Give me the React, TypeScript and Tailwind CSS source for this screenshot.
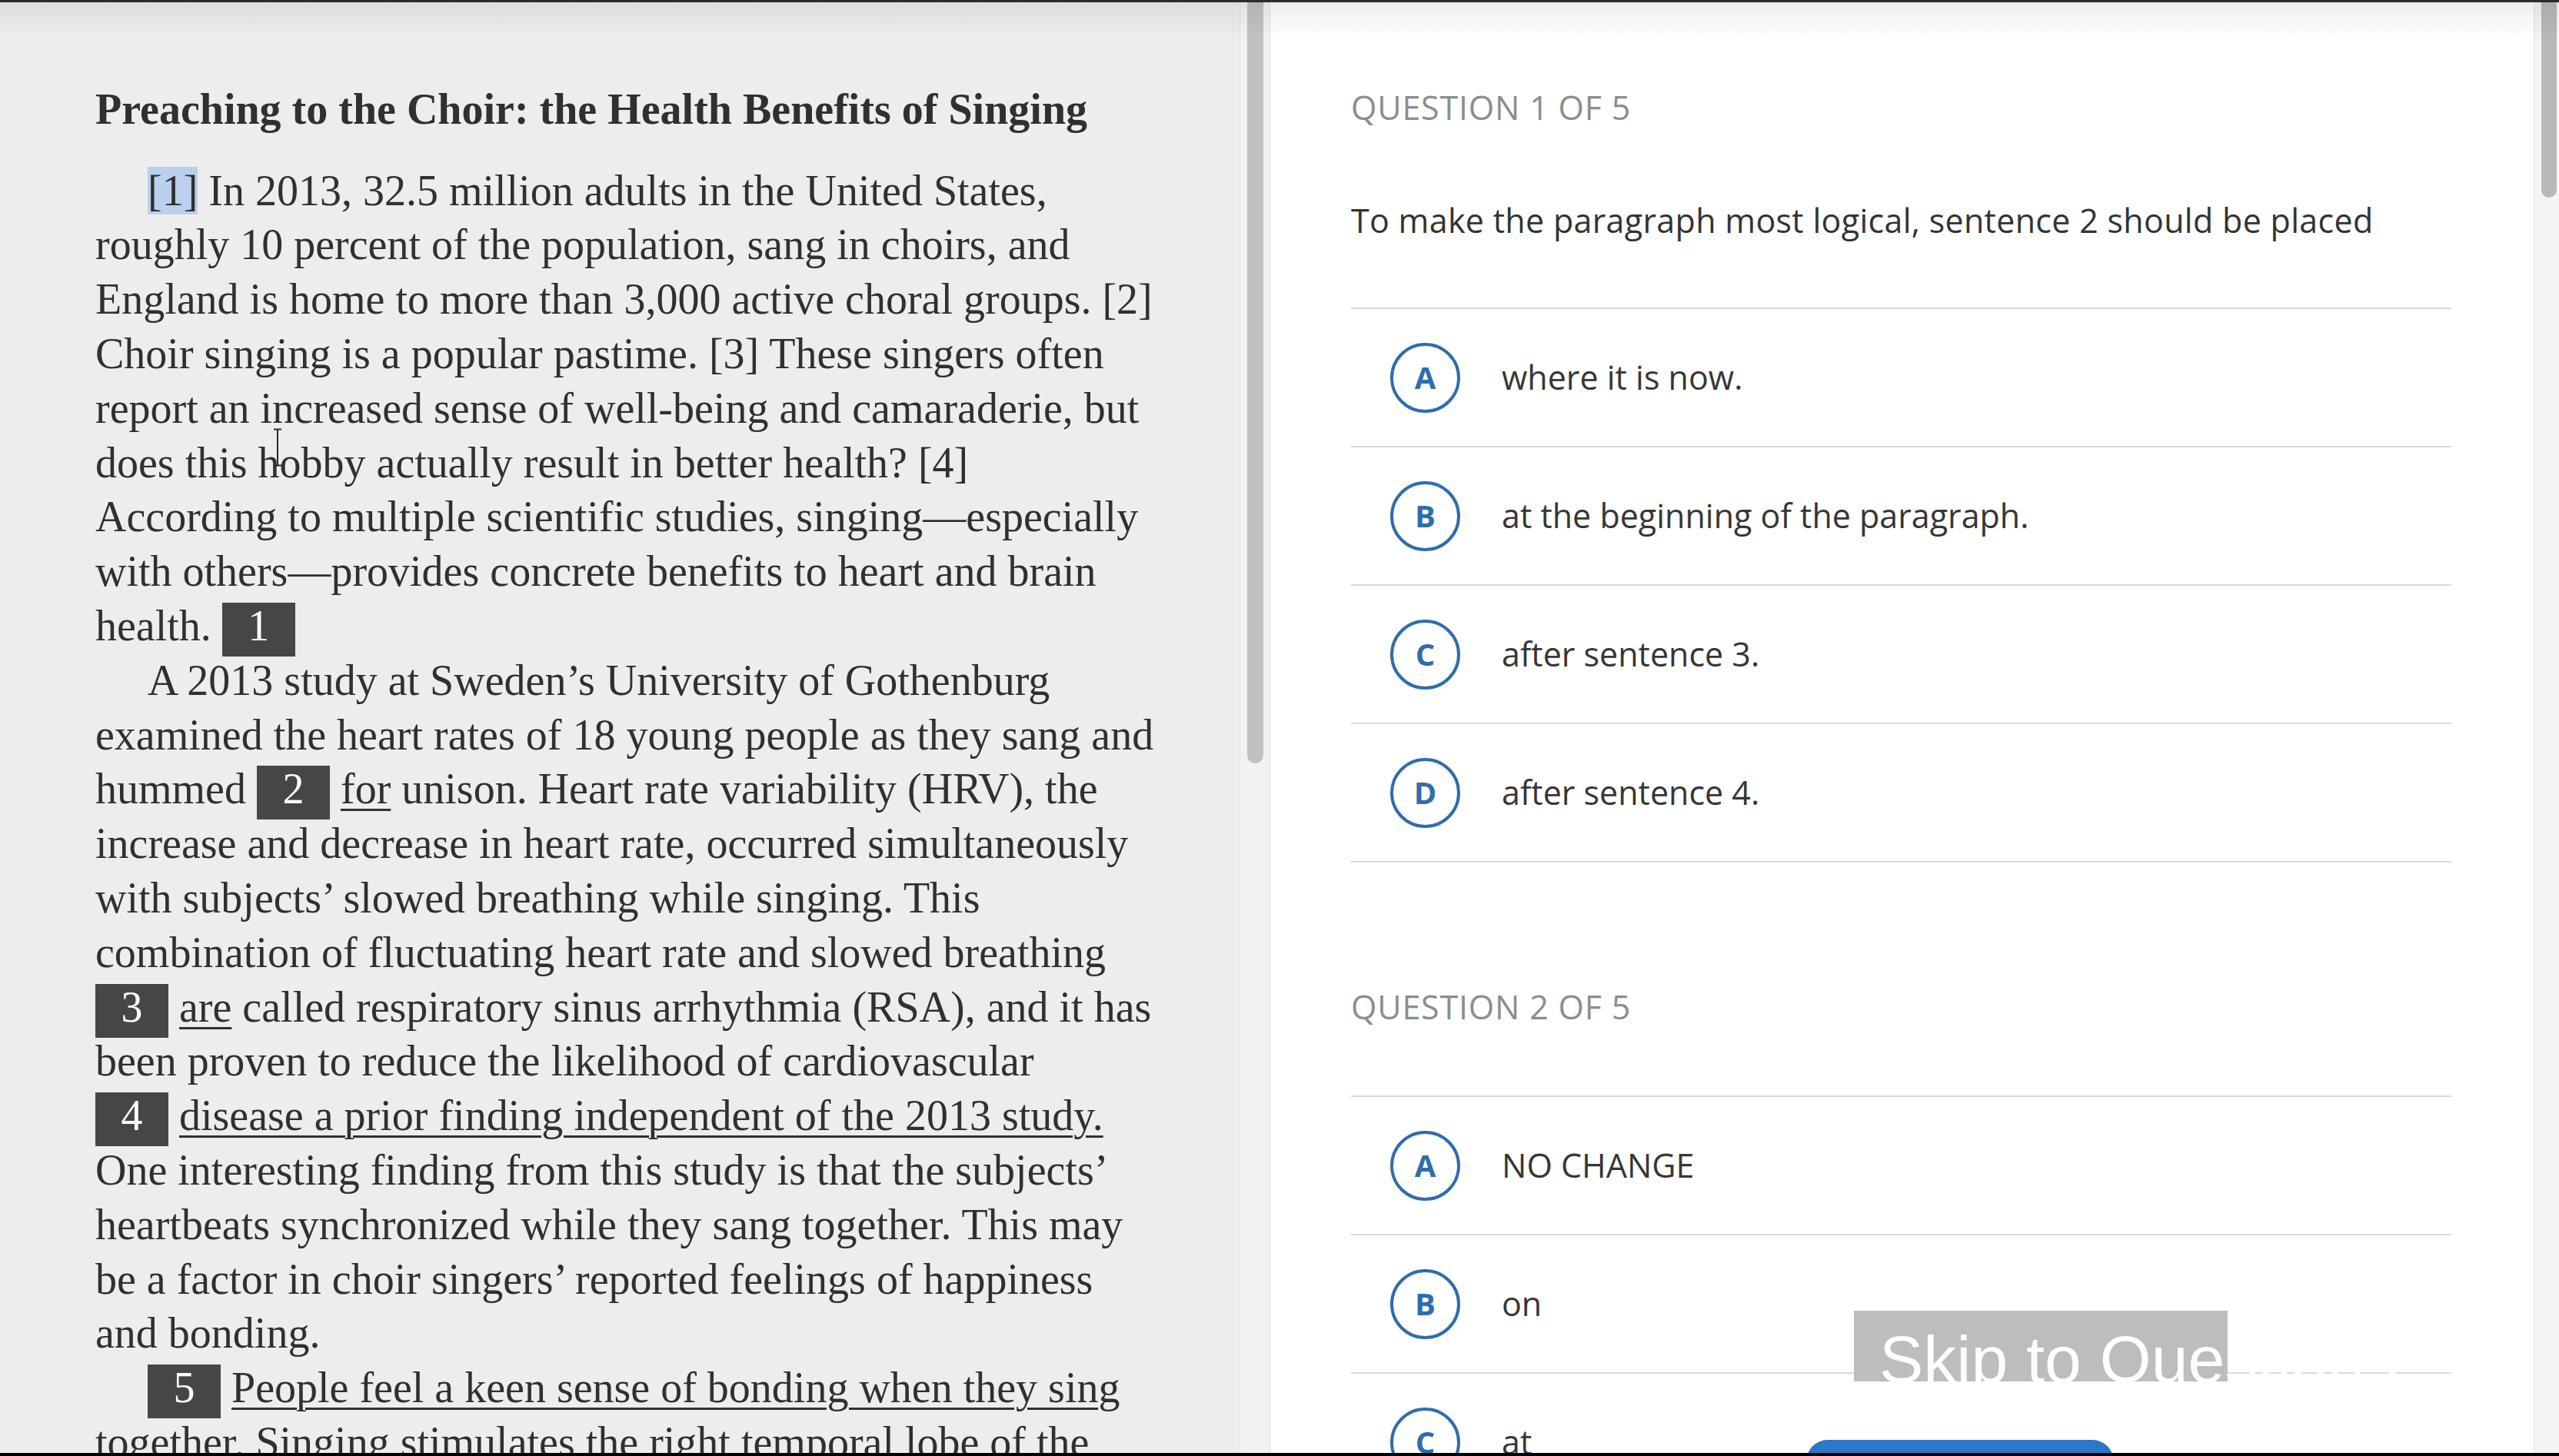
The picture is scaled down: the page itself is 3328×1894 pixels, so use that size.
import React from 'react';

type Seg = string | { box: number } | { u: string } | { hl: string };

interface Line {
  indent?: boolean;
  segs: Seg[];
}

const passage: Line[] = [
  { indent: true, segs: [{ hl: '[1]' }, ' In 2013, 32.5 million adults in the United States,'] },
  { segs: ['roughly 10 percent of the population, sang in choirs, and'] },
  { segs: ['England is home to more than 3,000 active choral groups. [2]'] },
  { segs: ['Choir singing is a popular pastime. [3] These singers often'] },
  { segs: ['report an increased sense of well-being and camaraderie, but'] },
  { segs: ['does this hobby actually result in better health? [4]'] },
  { segs: ['According to multiple scientific studies, singing\u2014especially'] },
  { segs: ['with others\u2014provides concrete benefits to heart and brain'] },
  { segs: ['health. ', { box: 1 }] },
  { indent: true, segs: ['A 2013 study at Sweden\u2019s University of Gothenburg'] },
  { segs: ['examined the heart rates of 18 young people as they sang and'] },
  { segs: ['hummed ', { box: 2 }, ' ', { u: 'for' }, ' unison. Heart rate variability (HRV), the'] },
  { segs: ['increase and decrease in heart rate, occurred simultaneously'] },
  { segs: ['with subjects\u2019 slowed breathing while singing. This'] },
  { segs: ['combination of fluctuating heart rate and slowed breathing'] },
  { segs: [{ box: 3 }, ' ', { u: 'are' }, ' called respiratory sinus arrhythmia (RSA), and it has'] },
  { segs: ['been proven to reduce the likelihood of cardiovascular'] },
  { segs: [{ box: 4 }, ' ', { u: 'disease a prior finding independent of the 2013 study.' }] },
  { segs: ['One interesting finding from this study is that the subjects\u2019'] },
  { segs: ['heartbeats synchronized while they sang together. This may'] },
  { segs: ['be a factor in choir singers\u2019 reported feelings of happiness'] },
  { segs: ['and bonding.'] },
  { indent: true, segs: [{ box: 5 }, ' ', { u: 'People feel a keen sense of bonding when they sing' }] },
  { segs: [{ u: 'together.' }, ' Singing stimulates the right temporal lobe of the'] },
];

const renderSeg = (seg: Seg, i: number) => {
  if (typeof seg === 'string') return <span key={i}>{seg}</span>;
  if ('box' in seg) {
    return (
      <span
        key={i}
        className="inline-block h-[70px] w-[95px] bg-[#464646] text-center leading-[60px] text-white"
      >
        {seg.box}
      </span>
    );
  }
  if ('u' in seg) {
    return (
      <span key={i} className="underline decoration-[3px] underline-offset-[7px]">
        {seg.u}
      </span>
    );
  }
  return (
    <span key={i} className="bg-[#bad0ec]">
      {seg.hl}
    </span>
  );
};

const Passage: React.FC = () => (
  <div className="h-full w-[1612px] shrink-0 overflow-hidden bg-[#ededed] pl-[124px] pt-[107px] font-['Liberation_Serif',serif] text-[56px] text-[#303030]">
    <h1 className="h-[70.6px] whitespace-nowrap font-bold leading-[70.6px]">
      Preaching to the Choir: the Health Benefits of Singing
    </h1>
    <div className="mt-[35px]">
      {passage.map((line, idx) => (
        <div
          key={idx}
          className={`h-[70.8px] whitespace-nowrap leading-[70.8px] ${line.indent ? 'pl-[68px]' : ''}`}
        >
          {line.segs.map(renderSeg)}
        </div>
      ))}
    </div>
  </div>
);

const Option: React.FC<{ letter: string; text: string }> = ({ letter, text }) => (
  <div className="flex h-[180px] items-center border-b-2 border-[#dadada]">
    <div className="ml-[51px] flex h-[91px] w-[91px] shrink-0 items-center justify-center rounded-full border-4 border-[#2f6dab] text-[40px] font-bold text-[#2f6dab]">
      {letter}
    </div>
    <div className="ml-[54px] whitespace-nowrap text-[43px] text-[#363636]">{text}</div>
  </div>
);

const Questions: React.FC = () => (
  <div className="h-full min-w-0 flex-1 overflow-hidden bg-white pl-[105px] pr-[107px] pt-[105px] font-['Open_Sans',sans-serif]">
    {/* Question 1 */}
    <div className="text-[43px] leading-[70px] tracking-[0.8px] text-[#8d8d8d]">QUESTION 1 OF 5</div>
    <div className="mt-[77px] whitespace-nowrap text-[43px] leading-[70px] tracking-[0.3px] text-[#333]">
      To make the paragraph most logical, sentence 2 should be placed
    </div>
    <div className="mt-[78px] border-t-2 border-[#dadada]">
      <Option letter="A" text="where it is now." />
      <Option letter="B" text="at the beginning of the paragraph." />
      <Option letter="C" text="after sentence 3." />
      <Option letter="D" text="after sentence 4." />
    </div>

    {/* Question 2 */}
    <div className="mt-[153px] text-[43px] leading-[70px] tracking-[0.8px] text-[#8d8d8d]">QUESTION 2 OF 5</div>
    <div className="mt-[80px] border-t-2 border-[#dadada]">
      <Option letter="A" text="NO CHANGE" />
      <Option letter="B" text="on" />
      <Option letter="C" text="at" />
    </div>
  </div>
);

export default function App() {
  return (
    <div className="relative flex h-[1894px] w-[3328px] overflow-hidden bg-white">
      <Passage />

      {/* passage scrollbar */}
      <div className="h-full w-[40px] shrink-0 border-x border-[#e0e0e0] bg-[#f2f2f2]">
        <div className="ml-[9px] h-[993px] w-[21px] rounded-b-full bg-[#c1c1c1]" />
      </div>

      <Questions />

      {/* questions scrollbar */}
      <div className="h-full w-[33px] shrink-0 border-l border-[#e0e0e0] bg-[#f4f4f4]">
        <div className="ml-[9px] h-[257px] w-[20px] rounded-b-full bg-[#b8b8b8]" />
      </div>

      {/* top edge + shadow */}
      <div className="absolute inset-x-0 top-0 h-[3px] bg-[#2b2b2b]" />
      <div className="pointer-events-none absolute inset-x-0 top-[3px] h-[48px] bg-linear-to-b from-black/[0.07] to-transparent" />

      {/* text cursor */}
      <svg className="absolute left-[354px] top-[557px]" width="14" height="50" viewBox="0 0 14 50">
        <path d="M2 1.5h10M7 1.5v47M2 48.5h10" stroke="#2a2a2a" strokeWidth="2" fill="none" />
      </svg>

      {/* skip link overlay */}
      <div className="absolute left-[2411px] top-[1705px] h-[92px] w-[900px] overflow-hidden">
        <div className="absolute inset-y-0 left-0 w-[486px] bg-[#bdbdbd]" />
        <div className="absolute left-[33px] top-[20px] whitespace-nowrap font-['Liberation_Sans',sans-serif] text-[86px] leading-none text-white">
          Skip to Question 2
        </div>
      </div>

      {/* bottom action button */}
      <div className="absolute left-[2349px] top-[1873px] h-[60px] w-[400px] rounded-[28px] bg-[#2b79c6]" />

      {/* bottom edge */}
      <div className="absolute inset-x-0 bottom-0 h-[4px] bg-black" />
    </div>
  );
}
